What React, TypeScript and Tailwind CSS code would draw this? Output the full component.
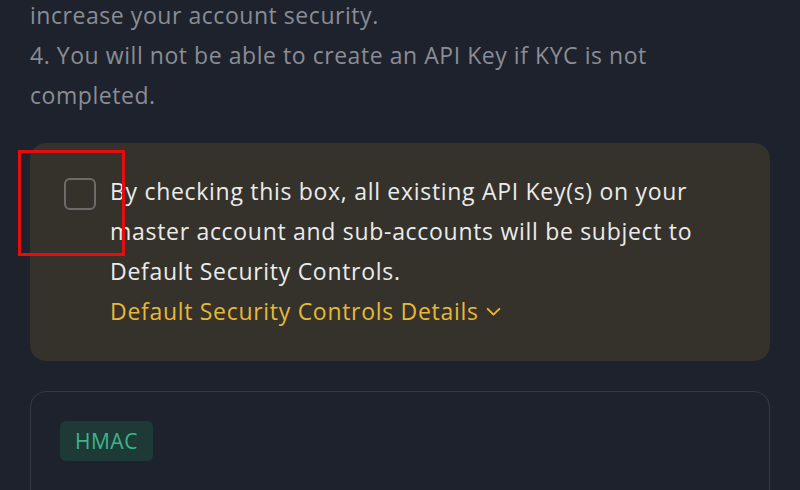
import React from "react";

export default function App() {
  return (
    <div
      className="w-[800px] h-[490px] overflow-hidden bg-[#1e222c]"
      style={{ fontFamily: "'Open Sans', Lato, sans-serif" }}
    >
      <div className="px-[30px] -mt-[5px] text-[23px] leading-[40px] tracking-[0.55px] text-[#8a8d95] whitespace-nowrap">
        <p>increase your account security.</p>
        <p>4. You will not be able to create an API Key if KYC is not</p>
        <p>completed.</p>
      </div>

      <div className="relative mx-[30px] mt-[28px] rounded-[16px] bg-[#34322a] pl-[34px] pr-[30px] pt-[28px] pb-[30px] flex gap-[14px]">
        <div className="mt-[7px] w-[32px] h-[32px] shrink-0 rounded-[6px] border-2 border-[#6c6c6a]" />
        <div className="text-[23px] leading-[40px] tracking-[0.7px] text-[#ebebeb] whitespace-nowrap">
          <p>By checking this box, all existing API Key(s) on your</p>
          <p>master account and sub-accounts will be subject to</p>
          <p>Default Security Controls.</p>
          <p className="flex items-center gap-[6px] text-[#e7b836]">
            Default Security Controls Details
            <svg width="17" height="17" viewBox="0 0 16 16" fill="none" stroke="currentColor" strokeWidth="1.8" strokeLinecap="round" strokeLinejoin="round">
              <path d="M2.5 5.5 8 11l5.5-5.5" />
            </svg>
          </p>
        </div>
        <div className="absolute left-[-12px] top-[7px] w-[107px] h-[106px] border-[3px] border-[#e50d0d]" />
      </div>

      <div className="mx-[30px] mt-[30px] h-[200px] rounded-[16px] border border-[#363a46] pl-[29px] pt-[29px]">
        <span className="inline-block rounded-[6px] bg-[#1d3a37] px-[15px] py-[6px] text-[21px] leading-[28px] tracking-[0.5px] text-[#3db48a]">
          HMAC
        </span>
      </div>
    </div>
  );
}
